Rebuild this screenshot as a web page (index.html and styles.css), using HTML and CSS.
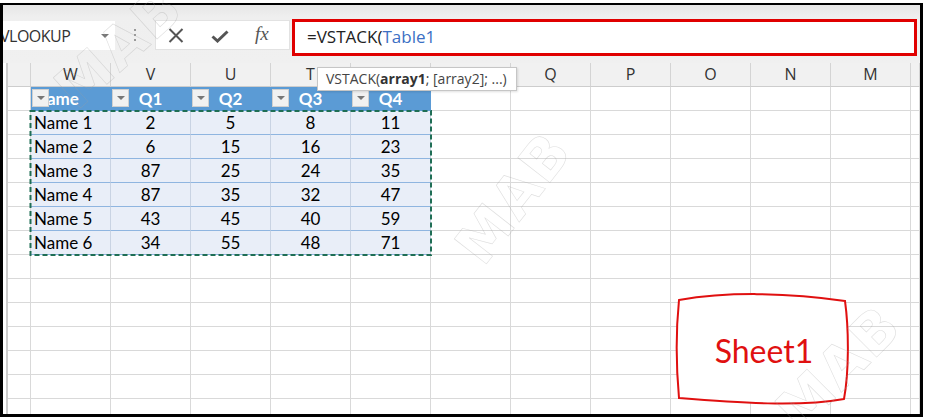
FILE: index.html
```html
<!DOCTYPE html>
<html>
<head>
<meta charset="utf-8">
<link rel="stylesheet" href="styles.css">
</head>
<body>
<div class="page">
  <div class="screen">
    <div class="toolbar">
      <div class="namebox"><span class="nb-text">VLOOKUP</span><span class="nb-arrow"></span></div>
      <div class="dots"><i></i><i></i><i></i></div>
      <div class="fxbox">
        <svg class="ic-x" width="16" height="15" viewBox="0 0 16 15"><path d="M1.5 1 L14.5 14 M14.5 1 L1.5 14" stroke="#555" stroke-width="2" fill="none"/></svg>
        <svg class="ic-ok" width="18" height="13" viewBox="0 0 18 13"><path d="M1.5 6.5 L6.5 11 L16.5 1.5" stroke="#555" stroke-width="3" fill="none"/></svg>
        <span class="fx">fx</span>
      </div>
      <div class="formula">=VSTACK(<span class="ref">Table1</span></div>
    </div>
    <div class="grid">
      <div class="row colhead">
        <div class="c rh"></div>
        <div class="c">W</div><div class="c">V</div><div class="c">U</div><div class="c">T</div><div class="c"></div><div class="c"></div><div class="c">Q</div><div class="c">P</div><div class="c">O</div><div class="c">N</div><div class="c">M</div><div class="c"></div>
      </div>
      <div class="row">
        <div class="c rh"></div>
        <div class="c th left"><span class="dd"></span>Name</div>
        <div class="c th"><span class="dd"></span>Q1</div>
        <div class="c th"><span class="dd"></span>Q2</div>
        <div class="c th"><span class="dd"></span>Q3</div>
        <div class="c th"><span class="dd"></span>Q4</div>
        <div class="c"></div><div class="c"></div><div class="c"></div><div class="c"></div><div class="c"></div><div class="c"></div><div class="c"></div>
      </div>
      <div class="row">
        <div class="c rh"></div>
        <div class="c td left">Name 1</div><div class="c td">2</div><div class="c td">5</div><div class="c td">8</div><div class="c td">11</div>
        <div class="c"></div><div class="c"></div><div class="c"></div><div class="c"></div><div class="c"></div><div class="c"></div><div class="c"></div>
      </div>
      <div class="row">
        <div class="c rh"></div>
        <div class="c td left">Name 2</div><div class="c td">6</div><div class="c td">15</div><div class="c td">16</div><div class="c td">23</div>
        <div class="c"></div><div class="c"></div><div class="c"></div><div class="c"></div><div class="c"></div><div class="c"></div><div class="c"></div>
      </div>
      <div class="row">
        <div class="c rh"></div>
        <div class="c td left">Name 3</div><div class="c td">87</div><div class="c td">25</div><div class="c td">24</div><div class="c td">35</div>
        <div class="c"></div><div class="c"></div><div class="c"></div><div class="c"></div><div class="c"></div><div class="c"></div><div class="c"></div>
      </div>
      <div class="row">
        <div class="c rh"></div>
        <div class="c td left">Name 4</div><div class="c td">87</div><div class="c td">35</div><div class="c td">32</div><div class="c td">47</div>
        <div class="c"></div><div class="c"></div><div class="c"></div><div class="c"></div><div class="c"></div><div class="c"></div><div class="c"></div>
      </div>
      <div class="row">
        <div class="c rh"></div>
        <div class="c td left">Name 5</div><div class="c td">43</div><div class="c td">45</div><div class="c td">40</div><div class="c td">59</div>
        <div class="c"></div><div class="c"></div><div class="c"></div><div class="c"></div><div class="c"></div><div class="c"></div><div class="c"></div>
      </div>
      <div class="row">
        <div class="c rh"></div>
        <div class="c td left">Name 6</div><div class="c td">34</div><div class="c td">55</div><div class="c td">48</div><div class="c td">71</div>
        <div class="c"></div><div class="c"></div><div class="c"></div><div class="c"></div><div class="c"></div><div class="c"></div><div class="c"></div>
      </div>
      <div class="row"><div class="c rh"></div><div class="c"></div><div class="c"></div><div class="c"></div><div class="c"></div><div class="c"></div><div class="c"></div><div class="c"></div><div class="c"></div><div class="c"></div><div class="c"></div><div class="c"></div><div class="c"></div></div>
      <div class="row"><div class="c rh"></div><div class="c"></div><div class="c"></div><div class="c"></div><div class="c"></div><div class="c"></div><div class="c"></div><div class="c"></div><div class="c"></div><div class="c"></div><div class="c"></div><div class="c"></div><div class="c"></div></div>
      <div class="row"><div class="c rh"></div><div class="c"></div><div class="c"></div><div class="c"></div><div class="c"></div><div class="c"></div><div class="c"></div><div class="c"></div><div class="c"></div><div class="c"></div><div class="c"></div><div class="c"></div><div class="c"></div></div>
      <div class="row"><div class="c rh"></div><div class="c"></div><div class="c"></div><div class="c"></div><div class="c"></div><div class="c"></div><div class="c"></div><div class="c"></div><div class="c"></div><div class="c"></div><div class="c"></div><div class="c"></div><div class="c"></div></div>
      <div class="row"><div class="c rh"></div><div class="c"></div><div class="c"></div><div class="c"></div><div class="c"></div><div class="c"></div><div class="c"></div><div class="c"></div><div class="c"></div><div class="c"></div><div class="c"></div><div class="c"></div><div class="c"></div></div>
      <div class="row"><div class="c rh"></div><div class="c"></div><div class="c"></div><div class="c"></div><div class="c"></div><div class="c"></div><div class="c"></div><div class="c"></div><div class="c"></div><div class="c"></div><div class="c"></div><div class="c"></div><div class="c"></div></div>
      <div class="row"><div class="c rh"></div><div class="c"></div><div class="c"></div><div class="c"></div><div class="c"></div><div class="c"></div><div class="c"></div><div class="c"></div><div class="c"></div><div class="c"></div><div class="c"></div><div class="c"></div><div class="c"></div></div>
    </div>
  </div>

  <svg class="marquee" width="925" height="419" viewBox="0 0 925 419">
    <rect x="30.5" y="111" width="400.5" height="144" fill="none" stroke="#1f6e55" stroke-width="2" stroke-dasharray="5 3"/>
  </svg>

  <div class="tooltip">VSTACK(<b>array1</b>; [array2]; ...)</div>

  <div class="note">
    <svg class="note-shape" width="180" height="120" viewBox="674 290 180 120">
      <path d="M679,300 C725,292 785,292 845,301 C849,330 849,372 844,399 C800,407 740,403 679,398 C676,365 676,330 679,300 Z" fill="#fff" stroke="#e01010" stroke-width="2"/>
    </svg>
    <span class="note-text">Sheet1</span>
  </div>

  <span class="wm wm1">MAB</span>
  <span class="wm wm2">MAB</span>
  <span class="wm wm3">MAB</span>
</div>
</body>
</html>
```
FILE: styles.css
```css
* { box-sizing: border-box; }
html, body { margin: 0; padding: 0; background: #fff; }
.page {
  position: relative;
  width: 925px;
  height: 419px;
  overflow: hidden;
  padding-top: 3px;
  font-family: "Open Sans", "Liberation Sans", sans-serif;
}
.screen {
  width: 923px;
  height: 414px;
  border-top: 2px solid #000;
  border-left: 3px solid #000;
  border-right: 3px solid #000;
  border-bottom: 3px solid #000;
  overflow: hidden;
  background: #fff;
}
.toolbar {
  height: 58px;
  display: flex;
  align-items: flex-start;
  background: linear-gradient(#e6e6e6, #efefef 12px, #f0f0f0);
}
.namebox {
  position: relative;
  margin-top: 16px;
  width: 112px;
  height: 29px;
  background: #fff;
  overflow: hidden;
  display: flex;
  align-items: center;
}
.nb-text {
  margin-left: -3px;
  font-size: 16px;
  letter-spacing: -0.5px;
  color: #333;
}
.nb-arrow {
  position: absolute;
  left: 98px;
  top: 13px;
  width: 0; height: 0;
  border-left: 4px solid transparent;
  border-right: 4px solid transparent;
  border-top: 4px solid #777;
}
.dots {
  margin-left: 19px;
  margin-top: 24px;
  width: 3px;
  display: flex;
  flex-direction: column;
  gap: 3px;
}
.dots i {
  display: block;
  width: 2px; height: 2px;
  background: #999;
}
.fxbox {
  margin-left: 18px;
  margin-top: 15px;
  width: 135px;
  height: 30px;
  background: #fff;
  border: 1px solid #e2e2e2;
  display: flex;
  align-items: center;
}
.ic-x { margin-left: 12px; }
.ic-ok { margin-left: 27px; margin-top: 2px; }
.fx {
  margin-left: 26px;
  font-family: "Liberation Serif", "DejaVu Serif", serif;
  font-style: italic;
  font-size: 19px;
  color: #555;
  margin-top: -2px;
}
.formula {
  margin-left: 2px;
  margin-top: 14px;
  width: 625px;
  height: 37px;
  background: #fff;
  border: 3px solid #e00000;
  padding-left: 12px;
  font-size: 17px;
  line-height: 30px;
  color: #222;
}
.formula .ref { color: #3b6fc4; }

.grid {
  margin-left: 3px;
  border-left: 2px solid #cccccc;
}
.row {
  display: grid;
  grid-template-columns: 23px repeat(11, 80px) 1fr;
  height: 24px;
}
.c {
  position: relative;
  border-right: 1px solid #d9d9d9;
  border-bottom: 1px solid #d9d9d9;
  font-family: "Lato", "Liberation Sans", sans-serif;
  font-size: 17px;
  line-height: 23px;
  text-align: center;
  color: #000;
  white-space: nowrap;
}
.colhead .c {
  background: #f1f1f1;
  border-right-color: #d4d4d4;
  border-bottom-color: #cdcdcd;
  font-family: "Open Sans", "Liberation Sans", sans-serif;
  font-size: 16px;
  color: #333;
}
.colhead .rh { background: #f1f1f1; }
.th {
  background: #5b9bd5;
  border-right-color: #5b9bd5;
  border-bottom-color: #5b9bd5;
  color: #fff;
  font-weight: 700;
}
.td {
  background: #e9eef8;
  border-right-color: #c9d3e3;
  border-bottom-color: #8fb5e0;
}
.left { text-align: left; padding-left: 3px; }
.dd {
  position: absolute;
  left: 1px;
  top: 2px;
  width: 17px;
  height: 18px;
  background: #f1f1f1;
  border: 1px solid #d0d0d0;
}
.dd::after {
  content: "";
  position: absolute;
  left: 4px;
  top: 6px;
  border-left: 4px solid transparent;
  border-right: 4px solid transparent;
  border-top: 4px solid #777;
}

.marquee {
  position: absolute;
  left: 0; top: 0;
  pointer-events: none;
}
.tooltip {
  position: absolute;
  left: 317px;
  top: 67px;
  width: 200px;
  height: 24px;
  background: #fff;
  border: 1px solid #c6c6c6;
  box-shadow: 1px 1px 2px rgba(0,0,0,0.12);
  padding-left: 8px;
  font-size: 14px;
  line-height: 21px;
  color: #444;
  white-space: nowrap;
}
.tooltip b { color: #333; }

.note {
  position: absolute;
  left: 674px;
  top: 290px;
  width: 180px;
  height: 120px;
  display: flex;
  align-items: center;
  justify-content: center;
}
.note-shape {
  position: absolute;
  left: 0; top: 0;
}
.note-text {
  position: relative;
  font-family: "Lato", "Liberation Sans", sans-serif;
  font-size: 32px;
  color: #e01010;
}

.wm {
  position: absolute;
  font-family: "DejaVu Sans", sans-serif;
  font-weight: 700;
  font-size: 56px;
  color: transparent;
  -webkit-text-stroke: 0.6px rgba(160,160,160,0.35);
  letter-spacing: 2px;
  transform-origin: center;
  pointer-events: none;
  line-height: 1;
}
.wm1 { left: 45px; top: 20px; transform: rotate(-42deg); }
.wm2 { left: 440px; top: 170px; transform: rotate(-52deg); }
.wm3 { left: 765px; top: 340px; transform: rotate(-45deg); }
```
